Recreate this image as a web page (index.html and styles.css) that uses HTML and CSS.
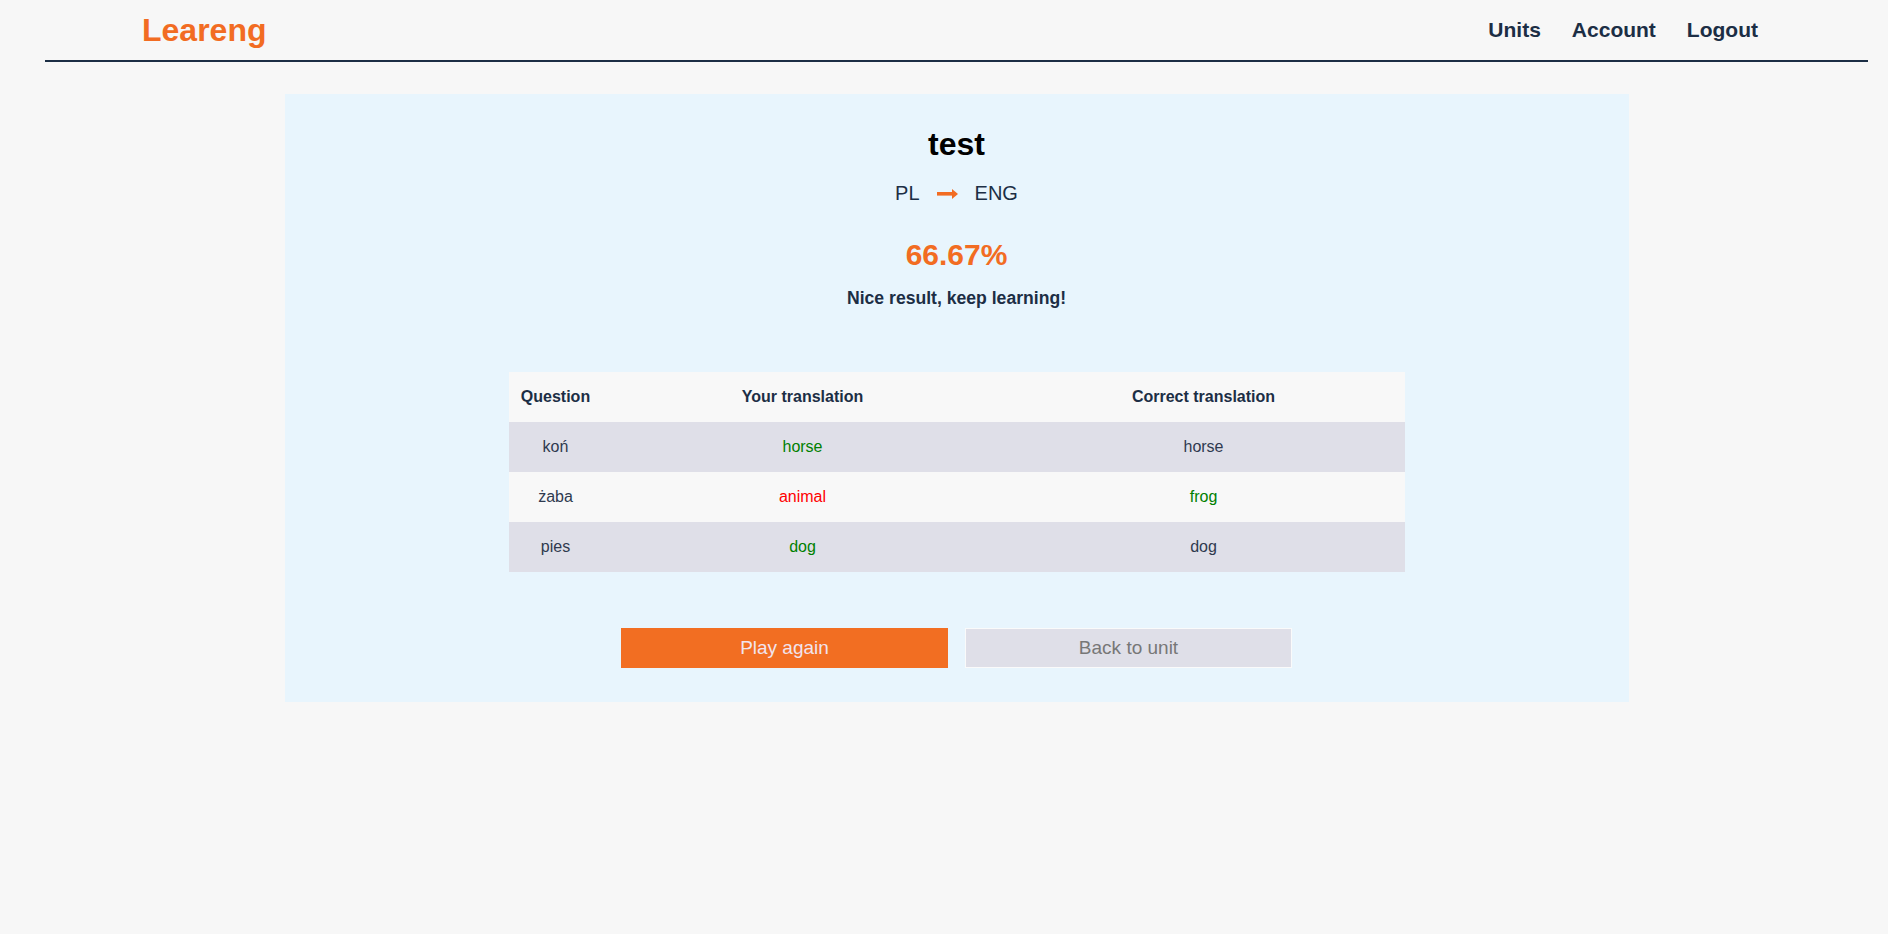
FILE: index.html
```html
<!DOCTYPE html>
<html lang="en">
<head>
<meta charset="utf-8">
<title>Leareng - Result</title>
<link rel="stylesheet" href="styles.css">
</head>
<body>
<div class="page">
  <header class="topbar">
    <a class="logo" href="#">Leareng</a>
    <nav class="nav">
      <a href="#">Units</a>
      <a href="#">Account</a>
      <a href="#">Logout</a>
    </nav>
  </header>
  <main class="card">
    <h1 class="title">test</h1>
    <div class="langs">
      <span>PL</span>
      <svg class="arrow" width="21" height="10" viewBox="0 0 21 10"><rect x="0" y="3" width="16" height="3.6" fill="#f26c22"/><polygon points="15,0 21,5 15,10" fill="#f26c22"/></svg>
      <span>ENG</span>
    </div>
    <div class="score">66.67%</div>
    <p class="message">Nice result, keep learning!</p>
    <table class="results">
      <colgroup><col class="c1"><col class="c2"><col class="c3"></colgroup>
      <thead>
        <tr><th>Question</th><th>Your translation</th><th>Correct translation</th></tr>
      </thead>
      <tbody>
        <tr><td>koń</td><td class="ok">horse</td><td>horse</td></tr>
        <tr><td>żaba</td><td class="bad">animal</td><td class="ok">frog</td></tr>
        <tr><td>pies</td><td class="ok">dog</td><td>dog</td></tr>
      </tbody>
    </table>
    <div class="actions">
      <button class="btn btn-primary">Play again</button>
      <button class="btn btn-secondary">Back to unit</button>
    </div>
  </main>
</div>
</body>
</html>
```

FILE: styles.css
```css
html, body {
  margin: 0;
  padding: 0;
  background: #f7f7f7;
  font-family: "Liberation Sans", Arial, sans-serif;
  color: #1c2e45;
}

.page {
  margin: 0 20px 0 45px;
}

.topbar {
  height: 60px;
  border-bottom: 2px solid #1c2e45;
  display: flex;
  align-items: center;
  justify-content: space-between;
  padding: 0 110px 0 97px;
}

.logo {
  color: #f26c22;
  font-size: 32px;
  font-weight: bold;
  text-decoration: none;
}

.nav {
  display: flex;
  gap: 31px;
}

.nav a {
  color: #1c2e45;
  font-size: 21px;
  font-weight: bold;
  text-decoration: none;
}

.card {
  width: 1344px;
  margin: 32px auto 0;
  background: #e8f5fd;
  padding: 32px 0 34px;
  display: flex;
  flex-direction: column;
  align-items: center;
}

.title {
  margin: 0;
  font-size: 32px;
  font-weight: bold;
  color: #000;
  line-height: 37px;
}

.langs {
  margin-top: 19px;
  display: flex;
  align-items: center;
  gap: 17px;
  font-size: 20px;
  line-height: 23px;
  color: #1c2e45;
}

.arrow {
  display: block;
}

.score {
  margin-top: 33px;
  font-size: 30px;
  font-weight: bold;
  color: #f26c22;
  line-height: 34px;
}

.message {
  margin: 16px 0 0;
  font-size: 17.6px;
  font-weight: bold;
  line-height: 20px;
  color: #1c2e45;
}

.results {
  margin-top: 64px;
  width: 896px;
  border-collapse: collapse;
  table-layout: fixed;
}

.results .c1 { width: 94px; }
.results .c2 { width: 400px; }
.results .c3 { width: 402px; }

.results th,
.results td {
  height: 50px;
  padding: 0;
  text-align: center;
  vertical-align: middle;
  font-size: 16px;
}

.results th {
  font-weight: bold;
  color: #1c2e45;
  background: #f8f8f8;
}

.results td {
  color: #2f3a4f;
}

.results tbody tr:nth-child(odd) td {
  background: #dfdfe8;
}

.results tbody tr:nth-child(even) td {
  background: #f8f8f8;
}

.results td.ok { color: #008000; }
.results td.bad { color: #ff0000; }

.actions {
  margin-top: 56px;
  display: flex;
  gap: 17px;
}

.btn {
  width: 327px;
  height: 40px;
  font-family: "Liberation Sans", Arial, sans-serif;
  font-size: 19px;
  cursor: pointer;
  padding: 0;
}

.btn-primary {
  background: #f26e22;
  color: #f1e4ee;
  border: 1px solid #f26e22;
}

.btn-secondary {
  background: #dfdfe8;
  color: #777;
  border: 1px solid #fafafa;
}
```
